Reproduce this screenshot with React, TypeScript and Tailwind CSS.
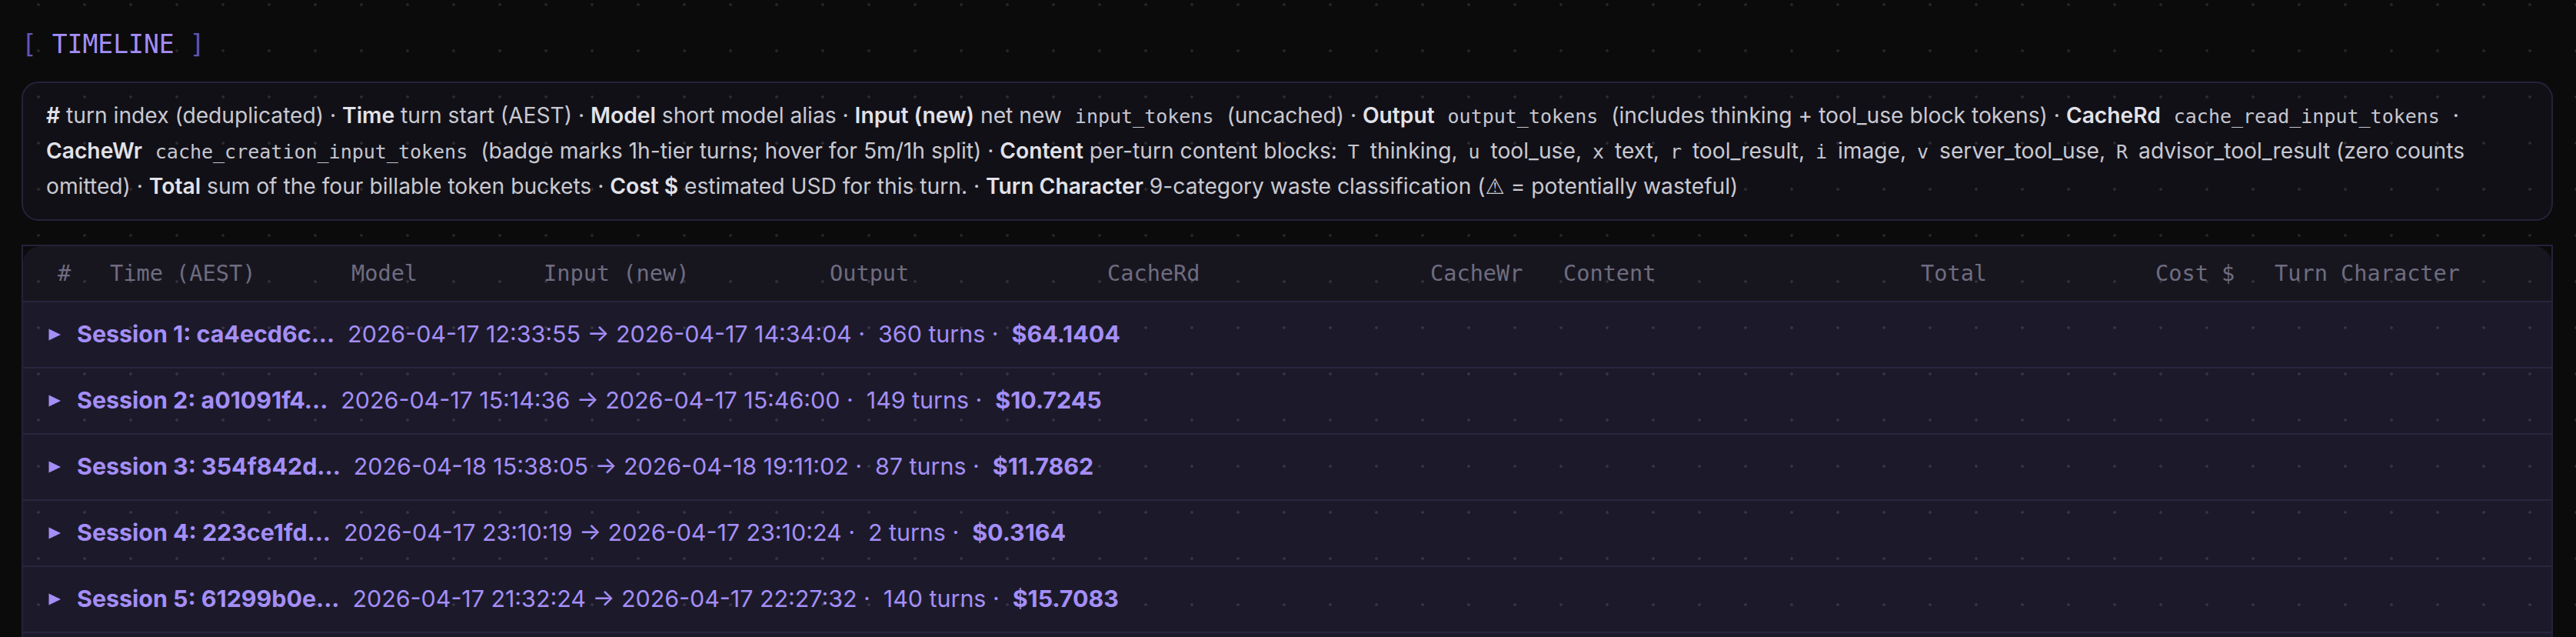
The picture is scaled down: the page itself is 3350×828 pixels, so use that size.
import React from "react";

const sessions = [
  { n: 1, id: "ca4ecd6c", start: "2026-04-17 12:33:55", end: "2026-04-17 14:34:04", turns: 360, cost: "64.1404" },
  { n: 2, id: "a01091f4", start: "2026-04-17 15:14:36", end: "2026-04-17 15:46:00", turns: 149, cost: "10.7245" },
  { n: 3, id: "354f842d", start: "2026-04-18 15:38:05", end: "2026-04-18 19:11:02", turns: 87, cost: "11.7862" },
  { n: 4, id: "223ce1fd", start: "2026-04-17 23:10:19", end: "2026-04-17 23:10:24", turns: 2, cost: "0.3164" },
  { n: 5, id: "61299b0e", start: "2026-04-17 21:32:24", end: "2026-04-17 22:27:32", turns: 140, cost: "15.7083" },
];

const columns = ["#", "Time (AEST)", "Model", "Input (new)", "Output", "CacheRd", "CacheWr", "Content", "Total", "Cost $", "Turn Character"];

function B({ children }: { children: React.ReactNode }) {
  return <b className="font-semibold text-[#e2e2e8]">{children}</b>;
}

// inline code token in the legend
function C({ children }: { children: React.ReactNode }) {
  return <span className="font-['DejaVu_Sans_Mono',monospace] text-[25px] px-[9px] text-[#c6c6cf]">{children}</span>;
}

function K({ children }: { children: React.ReactNode }) {
  return <span className="font-['DejaVu_Sans_Mono',monospace] text-[25px] px-[6px] text-[#c6c6cf]">{children}</span>;
}

function SessionRow({ s }: { s: (typeof sessions)[number] }) {
  return (
    <div className="h-[86px] flex items-center pl-[33px] border-b-2 border-[#29253d] bg-[#1c1a2a] text-[30.4px] text-[#a48ef8]">
      <svg width="16" height="16" viewBox="0 0 16 16" className="mr-[21px] shrink-0">
        <path d="M0.5 0.5 L16 8 L0.5 15.5 Z" fill="#a48ef8" />
      </svg>
      <div className="flex items-center gap-[17px]">
        <span className="font-bold">Session {s.n}: {s.id}...</span>
        <span>{s.start} → {s.end} ·</span>
        <span>{s.turns} turns ·</span>
        <span className="font-bold">${s.cost}</span>
      </div>
    </div>
  );
}

export default function App() {
  return (
    <div className="relative min-h-screen bg-[#0b0b0c] pl-[28px] pr-[30px] pt-[33px] font-['Inter',sans-serif] text-[28.6px] overflow-hidden">
      {/* dot grid */}
      <div className="pointer-events-none fixed inset-0 z-10 bg-[radial-gradient(circle,rgba(255,255,255,0.11)_1.6px,transparent_1.8px)] [background-size:60px_60px] [background-position:20px_36px]" />

      <h2 className="font-['DejaVu_Sans_Mono',monospace] text-[33px] leading-[50px] text-[#a48ef8]">
        <span className="text-[#6454b8]">[</span> TIMELINE <span className="text-[#6454b8]">]</span>
      </h2>

      {/* legend */}
      <div className="mt-[23px] rounded-[22px] border-2 border-[#26223a] bg-[#111017] px-[30px] py-[20px] text-[28.2px] leading-[44px] text-[#c9c9d1]">
        <B>#</B> turn index (deduplicated) · <B>Time</B> turn start (AEST) · <B>Model</B> short model alias · <B>Input (new)</B> net new <C>input_tokens</C> (uncached) · <B>Output</B> <C>output_tokens</C> (includes thinking + tool_use block tokens) · <B>CacheRd</B> <C>cache_read_input_tokens</C> · <B>CacheWr</B> <C>cache_creation_input_tokens</C> (badge marks 1h-tier turns; hover for 5m/1h split) · <B>Content</B> per-turn content blocks: <K>T</K> thinking, <K>u</K> tool_use, <K>x</K> text, <K>r</K> tool_result, <K>i</K> image, <K>v</K> server_tool_use, <K>R</K> advisor_tool_result (zero counts omitted) · <B>Total</B> sum of the four billable token buckets · <B>Cost $</B> estimated USD for this turn. · <B>Turn Character</B> 9-category waste classification (<span className="font-['DejaVu_Sans',sans-serif]">⚠︎</span> = potentially wasteful)
      </div>

      {/* table */}
      <div className="mt-[31px] border-2 border-b-0 border-[#26223a] bg-[#0b0b0c]">
        <div className="h-[73px] rounded-t-[22px] bg-[#17161f] border-b-2 border-[#29253d] grid grid-cols-[68px_314px_250px_372px_361px_420px_173px_465px_305px_155px_1fr] items-center pl-[45px] font-['DejaVu_Sans_Mono',monospace] text-[#6f6c80]">
          {columns.map((c) => (
            <div key={c} className="whitespace-pre">{c}</div>
          ))}
        </div>
        {sessions.map((s) => (
          <SessionRow key={s.n} s={s} />
        ))}
        <div className="h-[86px] bg-[#1c1a2a]" />
      </div>
    </div>
  );
}
